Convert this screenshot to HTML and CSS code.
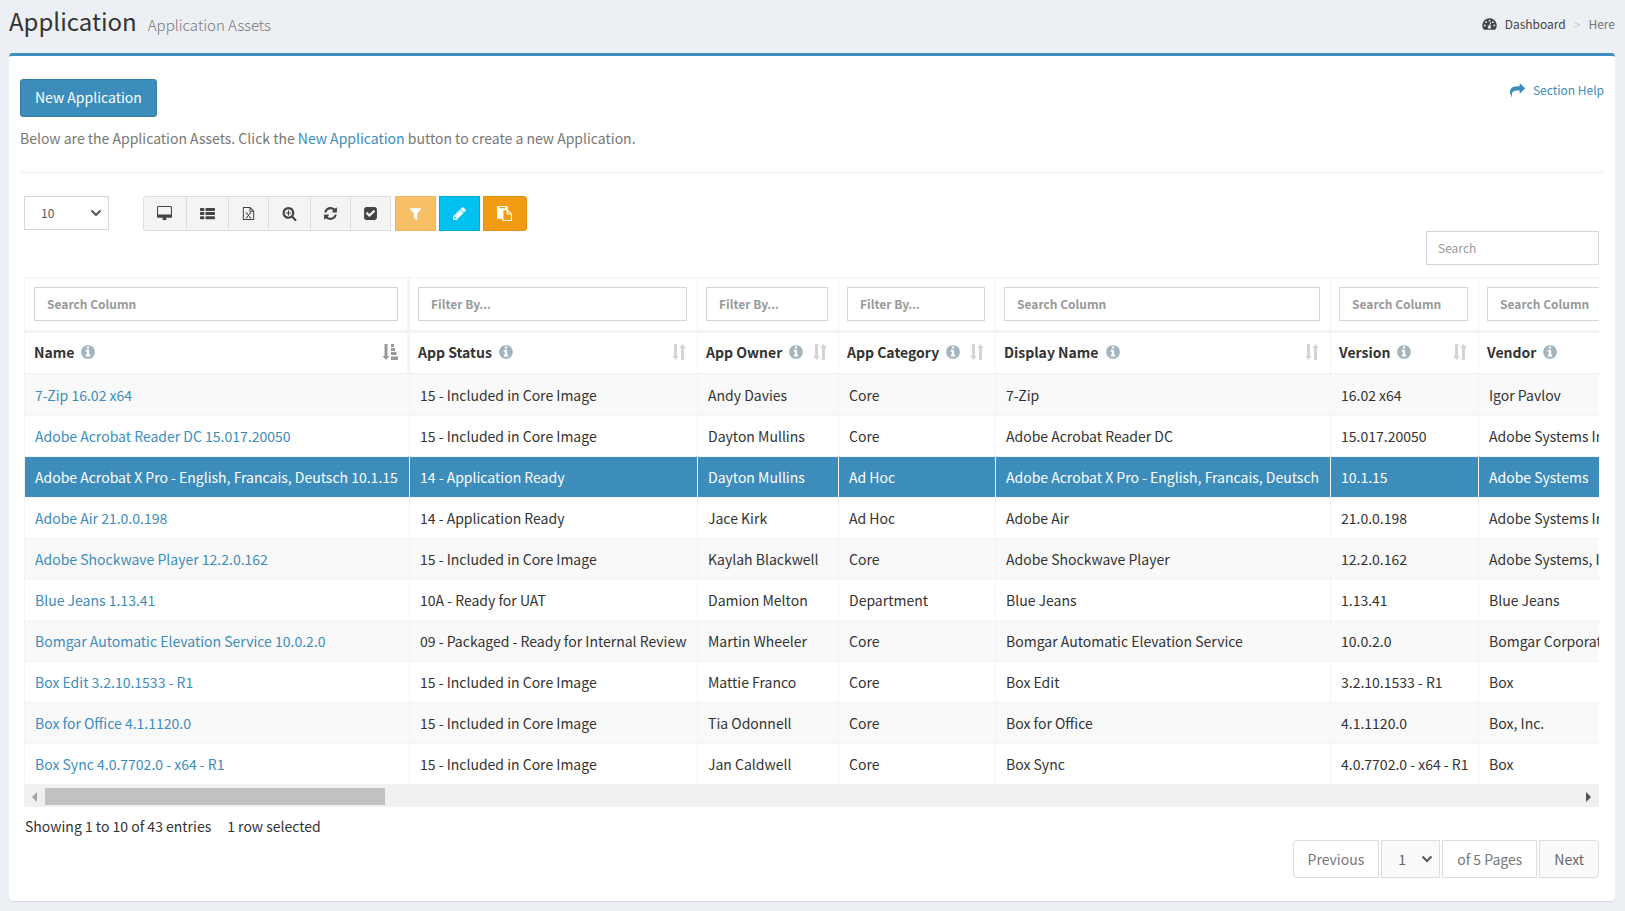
FILE: index.html
```html
<!DOCTYPE html>
<html lang="en">
<head>
<meta charset="utf-8">
<title>Application Assets</title>
<link rel="stylesheet" href="styles.css">
</head>
<body>
<svg class="sprite" aria-hidden="true">
  <symbol id="desktop" viewBox="0 0 1920 1792"><path d="M1728 992v-832q0-13-9.5-22.5t-22.5-9.5h-1472q-13 0-22.5 9.5t-9.5 22.5v832q0 13 9.5 22.5t22.5 9.5h1472q13 0 22.5-9.5t9.5-22.5zm128-832v1088q0 66-47 113t-113 47h-544q0 37 16 77.5t32 71 16 43.5q0 26-19 45t-45 19h-384q-26 0-45-19t-19-45q0-14 16-44t32-70 16-78h-544q-66 0-113-47t-47-113v-1088q0-66 47-113t113-47h1472q66 0 113 47t47 113z"/></symbol>
  <symbol id="list" viewBox="0 0 16 16"><path d="M.8 2h3a.8.8 0 0 1 .8.8v1.6a.8.8 0 0 1-.8.8h-3a.8.8 0 0 1-.8-.8V2.800a.8.8 0 0 1 .8-.8zM.8 6.400h3a.8.8 0 0 1 .8.8v1.600a.8.8 0 0 1-.8.8h-3a.8.8 0 0 1-.8-.8V7.200a.8.8 0 0 1 .8-.8zM.8 10.800h3a.8.8 0 0 1 .8.8v1.600a.8.8 0 0 1-.8.8h-3a.8.8 0 0 1-.8-.8v-1.600a.8.8 0 0 1 .8-.8zM6.600 2h8.600a.8.8 0 0 1 .8.8v1.600a.8.8 0 0 1-.8.8H6.600a.8.8 0 0 1-.8-.8V2.800a.8.8 0 0 1 .8-.8zM6.600 6.400h8.600a.8.8 0 0 1 .8.8v1.600a.8.8 0 0 1-.8.8H6.600a.8.8 0 0 1-.8-.8V7.200a.8.8 0 0 1 .8-.8zM6.600 10.800h8.600a.8.8 0 0 1 .8.8v1.600a.8.8 0 0 1-.8.8H6.600a.8.8 0 0 1-.8-.8v-1.600a.8.8 0 0 1 .8-.8z"/></symbol>
  <symbol id="excel" viewBox="0 0 14 16"><path d="M1.500 1.500h7l4 4v9h-11z M8.500 1.500v4h4" fill="none" stroke="currentColor" stroke-width="1.100" stroke-linejoin="round"/><path d="M4.800 7.500l4.300 5M9.100 7.500l-4.300 5M4 7.500h2M8 7.500h2M4 12.500h2M8 12.500h2" fill="none" stroke="currentColor"/></symbol>
  <symbol id="zoom" viewBox="0 0 1792 1792"><path d="M1088 800v64q0 13-9.500 22.500t-22.500 9.500h-224v224q0 13-9.500 22.500t-22.500 9.500h-64q-13 0-22.500-9.500t-9.500-22.500v-224h-224q-13 0-22.500-9.500t-9.500-22.500v-64q0-13 9.500-22.500t22.500-9.500h224v-224q0-13 9.500-22.500t22.500-9.500h64q13 0 22.500 9.500t9.500 22.500v224h224q13 0 22.500 9.500t9.500 22.500zm128 32q0-185-131.500-316.500t-316.500-131.500-316.500 131.500-131.500 316.500 131.500 316.500 316.500 131.500 316.500-131.500 131.500-316.500zm512 832q0 53-37.500 90.500t-90.500 37.500q-54 0-90-38l-343-342q-179 124-399 124-143 0-273.500-55.500t-225-150-150-225-55.500-273.500 55.500-273.500 150-225 225-150 273.500-55.500 273.500 55.500 225 150 150 225 55.500 273.500q0 220-124 399l343 343q37 37 37 90z"/></symbol>
  <symbol id="refresh" viewBox="0 0 1792 1792"><path d="M1639 1056q0 5-1 7-64 268-268 434.500t-478 166.500q-146 0-282.500-55t-243.500-157l-129 129q-19 19-45 19t-45-19-19-45v-448q0-26 19-45t45-19h448q26 0 45 19t19 45-19 45l-137 137q71 66 161 102t187 36q134 0 250-65t186-179q11-17 53-117 8-23 30-23h192q13 0 22.500 9.500t9.500 22.500zm25-800v448q0 26-19 45t-45 19h-448q-26 0-45-19t-19-45 19-45l138-138q-148-137-349-137-134 0-250 65t-186 179q-11 17-53 117-8 23-30 23h-199q-13 0-22.500-9.500t-9.500-22.500v-7q65-268 270-434.500t480-166.500q146 0 284 55.500t245 156.500l130-129q19-19 45-19t45 19 19 45z"/></symbol>
  <symbol id="check" viewBox="0 0 1792 1792"><path d="M813 1299l614-614q19-19 19-45t-19-45l-102-102q-19-19-45-19t-45 19l-467 467-211-211q-19-19-45-19t-45 19l-102 102q-19 19-19 45t19 45l358 358q19 19 45 19t45-19zm851-883v960q0 119-84.500 203.500t-203.500 84.500h-960q-119 0-203.500-84.500t-84.500-203.500v-960q0-119 84.500-203.500t203.500-84.500h960q119 0 203.500 84.500t84.500 203.500z"/></symbol>
  <symbol id="filter" viewBox="0 0 1792 1792"><path d="M1595 295q17 41-14 70l-493 493v742q0 42-39 59-13 5-25 5-27 0-45-19l-256-256q-19-19-19-45v-486l-493-493q-31-29-14-70 17-39 59-39h1280q42 0 59 39z"/></symbol>
  <symbol id="pencil" viewBox="0 0 1792 1792"><path d="M491 1536l91-91-235-235-91 91v107h128v128h107zm523-928q0-22-22-22-10 0-17 7l-542 542q-7 7-7 17 0 22 22 22 10 0 17-7l542-542q7-7 7-17zm-54-192l416 416-832 832h-416v-416zm683 96q0 53-37 90l-166 166-416-416 166-165q36-38 90-38 53 0 91 38l235 234q37 39 37 91z"/></symbol>
  <symbol id="paste" viewBox="0 0 1792 1792"><path d="M768 1664h896v-640h-416q-40 0-68-28t-28-68v-416h-384v1152zm256-1440v-64q0-13-9.500-22.500t-22.500-9.500h-704q-13 0-22.500 9.500t-9.500 22.500v64q0 13 9.500 22.500t22.500 9.500h704q13 0 22.500-9.500t9.500-22.500zm256 672h299l-299-299v299zm512 128v672q0 40-28 68t-68 28h-960q-40 0-68-28t-28-68v-160h-544q-40 0-68-28t-28-68v-1344q0-40 28-68t68-28h1088q40 0 68 28t28 68v328q21 13 36 28l408 408q28 28 48 76t20 88z"/></symbol>
  <symbol id="info" viewBox="0 0 1792 1792"><path d="M1152 1376v-160q0-14-9-23t-23-9h-96v-512q0-14-9-23t-23-9h-320q-14 0-23 9t-9 23v160q0 14 9 23t23 9h96v320h-96q-14 0-23 9t-9 23v160q0 14 9 23t23 9h448q14 0 23-9t9-23zm-128-896v-160q0-14-9-23t-23-9h-192q-14 0-23 9t-9 23v160q0 14 9 23t23 9h192q14 0 23-9t9-23zm640 416q0 209-103 385.500t-279.500 279.500-385.500 103-385.500-103-279.500-279.500-103-385.500 103-385.500 279.500-279.500 385.500-103 385.500 103 279.500 279.500 103 385.500z"/></symbol>
  <symbol id="share" viewBox="0 0 1792 1792"><path d="M1792 640q0 26-19 45l-512 512q-19 19-45 19t-45-19-19-45v-256h-224q-98 0-175.500 6t-154 21.500-133 42.500-105.500 69.500-80 101-48.500 138.500-17.500 181q0 55 5 123 0 6 2.500 23.500t2.500 26.500q0 15-8.500 25t-23.500 10q-16 0-28-17-7-9-13-22t-13.500-30-10.500-24q-127-285-127-451 0-199 53-333 162-403 875-403h224v-256q0-26 19-45t45-19 45 19l512 512q19 19 19 45z"/></symbol>
  <symbol id="gauge" viewBox="0 0 16 14"><path d="M8 1a7.500 7.500 0 0 0-6.400 11.600q.2.400.7.400h11.400q.5 0 .7-.4A7.500 7.500 0 0 0 8 1z"/><g fill="#ecf0f5"><circle cx="2.900" cy="8.600" r="1"/><circle cx="4.400" cy="5" r="1"/><circle cx="8" cy="3.400" r="1"/><circle cx="11.600" cy="5" r="1"/><circle cx="13.100" cy="8.600" r="1"/><path d="M9.800 5.200l-1.100 3.700a1.700 1.700 0 1 1-1-.2l1.100-3.800z"/></g></symbol>
  <symbol id="sort" viewBox="0 0 16 16"><path d="M3 0h3v12h2l-3.500 4L1 12h2zM10 16V4H8l3.500-4L15 4h-2v12z"/></symbol>
  <symbol id="sorted" viewBox="0 0 16 16"><path d="M2.500 0h3v12h2L4 16 .5 12h2zM9 0h3v3H9zM9 4h4v3H9zM9 8h5.500v3H9zM9 12.500h7V16H9z"/></symbol>
</svg>

<header class="page-head">
  <h1 class="title">Application <small class="subtitle">Application Assets</small></h1>
  <nav class="crumbs" aria-label="Breadcrumb">
    <a class="crumb-link" href="#"><svg class="gauge"><use href="#gauge"/></svg>Dashboard</a>
    <span class="crumb-sep">&gt;</span>
    <span class="crumb-here">Here</span>
  </nav>
</header>

<main class="box">
  <section class="intro">
    <div class="intro-row">
      <button class="btn-primary" type="button">New Application</button>
      <a class="help" href="#"><svg class="icon"><use href="#share"/></svg>Section Help</a>
    </div>
    <p class="lead">Below are the Application Assets. Click the <a href="#">New Application</a> button to create a new Application.</p>
  </section>

  <section class="grid">
    <div class="tools">
      <select class="field length" aria-label="Rows per page"><option>10</option></select>
      <div class="toolbar">
        <button class="tool first" type="button" aria-label="Columns"><svg class="icon wide"><use href="#desktop"/></svg></button>
        <button class="tool mid" type="button" aria-label="List"><svg class="icon"><use href="#list"/></svg></button>
        <button class="tool" type="button" aria-label="Export to Excel"><svg class="icon"><use href="#excel"/></svg></button>
        <button class="tool mid" type="button" aria-label="Zoom"><svg class="icon"><use href="#zoom"/></svg></button>
        <button class="tool" type="button" aria-label="Refresh"><svg class="icon"><use href="#refresh"/></svg></button>
        <button class="tool" type="button" aria-label="Select all"><svg class="icon"><use href="#check"/></svg></button>
        <button class="tool amber" type="button" aria-label="Filter"><svg class="icon"><use href="#filter"/></svg></button>
        <button class="tool cyan" type="button" aria-label="Edit"><svg class="icon"><use href="#pencil"/></svg></button>
        <button class="tool orange" type="button" aria-label="Copy"><svg class="icon"><use href="#paste"/></svg></button>
      </div>
    </div>
    <div class="search-row"><input class="field search" type="text" placeholder="Search" aria-label="Search"></div>

    <div class="scroller">
      <table class="assets">
        <colgroup><col class="c-name"><col class="c-status"><col class="c-owner"><col class="c-cat"><col class="c-display"><col class="c-version"><col class="c-vendor"></colgroup>
        <thead>
          <tr class="filters">
            <th><input class="field" type="text" placeholder="Search Column" aria-label="Search Name"></th>
            <th><input class="field" type="text" placeholder="Filter By..." aria-label="Filter App Status"></th>
            <th><input class="field" type="text" placeholder="Filter By..." aria-label="Filter App Owner"></th>
            <th><input class="field" type="text" placeholder="Filter By..." aria-label="Filter App Category"></th>
            <th><input class="field" type="text" placeholder="Search Column" aria-label="Search Display Name"></th>
            <th><input class="field" type="text" placeholder="Search Column" aria-label="Search Version"></th>
            <th><input class="field" type="text" placeholder="Search Column" aria-label="Search Vendor"></th>
          </tr>
          <tr class="labels">
            <th><div class="label">Name<svg class="info"><use href="#info"/></svg><button class="sort active" type="button" aria-label="Sort by Name"><svg><use href="#sorted"/></svg></button></div></th>
            <th><div class="label">App Status<svg class="info"><use href="#info"/></svg><button class="sort" type="button" aria-label="Sort by App Status"><svg><use href="#sort"/></svg></button></div></th>
            <th><div class="label">App Owner<svg class="info"><use href="#info"/></svg><button class="sort" type="button" aria-label="Sort by App Owner"><svg><use href="#sort"/></svg></button></div></th>
            <th><div class="label">App Category<svg class="info"><use href="#info"/></svg><button class="sort" type="button" aria-label="Sort by App Category"><svg><use href="#sort"/></svg></button></div></th>
            <th><div class="label">Display Name<svg class="info"><use href="#info"/></svg><button class="sort" type="button" aria-label="Sort by Display Name"><svg><use href="#sort"/></svg></button></div></th>
            <th><div class="label">Version<svg class="info"><use href="#info"/></svg><button class="sort" type="button" aria-label="Sort by Version"><svg><use href="#sort"/></svg></button></div></th>
            <th><div class="label">Vendor<svg class="info"><use href="#info"/></svg><button class="sort" type="button" aria-label="Sort by Vendor"><svg><use href="#sort"/></svg></button></div></th>
          </tr>
        </thead>
        <tbody>
          <tr><td><a href="#">7-Zip 16.02 x64</a></td><td>15 - Included in Core Image</td><td>Andy Davies</td><td>Core</td><td>7-Zip</td><td>16.02 x64</td><td>Igor Pavlov</td></tr>
          <tr><td><a href="#">Adobe Acrobat Reader DC 15.017.20050</a></td><td>15 - Included in Core Image</td><td>Dayton Mullins</td><td>Core</td><td>Adobe Acrobat Reader DC</td><td>15.017.20050</td><td>Adobe Systems Incorporated</td></tr>
          <tr class="selected"><td><a href="#">Adobe Acrobat X Pro - English, Francais, Deutsch 10.1.15</a></td><td>14 - Application Ready</td><td>Dayton Mullins</td><td>Ad Hoc</td><td>Adobe Acrobat X Pro - English, Francais, Deutsch</td><td>10.1.15</td><td>Adobe Systems</td></tr>
          <tr><td><a href="#">Adobe Air 21.0.0.198</a></td><td>14 - Application Ready</td><td>Jace Kirk</td><td>Ad Hoc</td><td>Adobe Air</td><td>21.0.0.198</td><td>Adobe Systems Incorporated</td></tr>
          <tr><td><a href="#">Adobe Shockwave Player 12.2.0.162</a></td><td>15 - Included in Core Image</td><td>Kaylah Blackwell</td><td>Core</td><td>Adobe Shockwave Player</td><td>12.2.0.162</td><td>Adobe Systems, Inc.</td></tr>
          <tr><td><a href="#">Blue Jeans 1.13.41</a></td><td>10A - Ready for UAT</td><td>Damion Melton</td><td>Department</td><td>Blue Jeans</td><td>1.13.41</td><td>Blue Jeans</td></tr>
          <tr><td><a href="#">Bomgar Automatic Elevation Service 10.0.2.0</a></td><td>09 - Packaged - Ready for Internal Review</td><td>Martin Wheeler</td><td>Core</td><td>Bomgar Automatic Elevation Service</td><td>10.0.2.0</td><td>Bomgar Corporation</td></tr>
          <tr><td><a href="#">Box Edit 3.2.10.1533 - R1</a></td><td>15 - Included in Core Image</td><td>Mattie Franco</td><td>Core</td><td>Box Edit</td><td>3.2.10.1533 - R1</td><td>Box</td></tr>
          <tr><td><a href="#">Box for Office 4.1.1120.0</a></td><td>15 - Included in Core Image</td><td>Tia Odonnell</td><td>Core</td><td>Box for Office</td><td>4.1.1120.0</td><td>Box, Inc.</td></tr>
          <tr><td><a href="#">Box Sync 4.0.7702.0 - x64 - R1</a></td><td>15 - Included in Core Image</td><td>Jan Caldwell</td><td>Core</td><td>Box Sync</td><td>4.0.7702.0 - x64 - R1</td><td>Box</td></tr>
        </tbody>
      </table>
    </div>
    <div class="scrollbar">
      <button class="arrow left" type="button" aria-label="Scroll left"></button>
      <div class="track"><div class="thumb"></div></div>
      <button class="arrow right" type="button" aria-label="Scroll right"></button>
    </div>

    <div class="status"><span>Showing 1 to 10 of 43 entries</span><span>1 row selected</span></div>
    <div class="pager">
      <button class="page prev" type="button">Previous</button>
      <select class="page page-select" aria-label="Page"><option>1</option></select>
      <span class="page">of 5 Pages</span>
      <button class="page next" type="button">Next</button>
    </div>
  </section>
</main>
</body>
</html>
```
FILE: styles.css
```css
* { box-sizing: border-box; }

body {
  margin: 0;
  padding: 0 10px 10px 9px;
  background: #ecf0f5;
  color: #333;
  font-family: "Noto Sans CJK SC", "Open Sans", sans-serif;
  font-size: 14px;
  line-height: 20px;
}

a { color: #3c8dbc; text-decoration: none; }
button, input, select { font-family: inherit; font-size: inherit; margin: 0; }
button { cursor: pointer; }
svg { display: block; fill: currentColor; }
.sprite { display: none; }
.icon { width: 15px; height: 15px; }
.icon.wide { width: 17px; }

.page-head {
  display: flex;
  justify-content: space-between;
  height: 53px;
}
.title {
  display: flex;
  align-items: baseline;
  gap: 11px;
  margin: 0;
  font-size: 24px;
  font-weight: 400;
  line-height: 42px;
}
.subtitle { font-size: 15px; font-weight: 300; color: #777; }
.crumbs {
  display: flex;
  align-items: center;
  gap: 8px;
  height: 48px;
  font-size: 12px;
  color: #777;
}
.crumb-link { display: flex; align-items: center; gap: 8px; color: #444; }
.gauge { width: 15px; height: 14px; }
.crumb-sep { color: #ccc; }

.box {
  background: #fff;
  border-top: 3px solid #3c8dbc;
  border-radius: 4px;
  box-shadow: 0 1px 1px rgba(0, 0, 0, .1);
  padding: 23px 11px;
}
.intro { border-bottom: 1px solid #eee; padding-bottom: 24px; }
.intro-row { display: flex; justify-content: space-between; align-items: flex-start; }
.btn-primary {
  height: 38px;
  padding: 0 14px 2px;
  border: 1px solid #367fa9;
  border-radius: 3px;
  background: #3c8dbc;
  color: #fff;
}
.help { display: flex; align-items: center; gap: 8px; height: 22px; font-size: 12px; }
.lead { margin: 11px 0 0; color: #777; }

.grid { padding: 23px 5px 0 4px; }
.tools { display: flex; gap: 34px; }
.field {
  display: block;
  width: 100%;
  height: 34px;
  padding: 0 12px 2px;
  border: 1px solid #d2d6de;
  border-radius: 0;
  background-color: #fff;
  color: #555;
  font-size: 12px;
}
.field::placeholder { color: #999; opacity: 1; }
.length, .page-select {
  appearance: none;
  background-image: url("data:image/svg+xml,%3Csvg xmlns='http://www.w3.org/2000/svg' viewBox='0 0 12 8'%3E%3Cpath d='M1.500 1.500L6 6l4.500-4.500' fill='none' stroke='%23555' stroke-width='2'/%3E%3C/svg%3E");
  background-repeat: no-repeat;
  background-position: right 6px center;
  background-size: 12px 8px;
}
.length { width: 85px; padding: 0 16px 2px; }
.toolbar { display: flex; }
.tool {
  display: flex;
  align-items: center;
  justify-content: center;
  width: 41px;
  height: 35px;
  margin-right: -1px;
  padding: 0 1px 0 0;
  border: 1px solid #ddd;
  background: #f4f4f4;
  color: #444;
}
.tool.mid { width: 43px; }
.tool.first { width: 44px; border-radius: 3px 0 0 3px; }
.tool.amber, .tool.cyan, .tool.orange { color: #fff; margin: 0 0 0 3px; }
.tool.amber { background: #f7c067; border-color: #edb45a; margin-left: 5px; }
.tool.cyan { background: #00c0ef; border-color: #00acd6; }
.tool.orange { width: 44px; background: #f39c12; border-color: #e08e0b; border-radius: 0 3px 3px 0; }

.search-row { display: flex; justify-content: flex-end; margin-bottom: 12px; }
.search { width: 173px; padding: 0 11px 2px; }

.scroller { overflow: hidden; }
.assets {
  table-layout: fixed;
  width: 1816px;
  border-collapse: separate;
  border-spacing: 0;
}
.c-name { width: 385px; }
.c-status { width: 288px; }
.c-owner { width: 141px; }
.c-cat { width: 157px; }
.c-display { width: 335px; }
.c-version { width: 148px; }
.c-vendor { width: 362px; }
.assets th, .assets td {
  padding: 0 9px;
  border-left: 1px solid #f4f4f4;
  text-align: left;
  white-space: nowrap;
}
.assets td { padding: 0 8px 0 10px; }
.assets th + th { padding: 0 10px 0 8px; }
.assets th:first-child { border-right: 2px solid #f4f4f4; }
.filters th { height: 56px; border-top: 1px solid #f4f4f4; border-bottom: 3px solid #f4f4f4; }
.filters .field { font-weight: 700; }
.filters th:last-child .field { width: 134px; }
.labels th { height: 42px; border-bottom: 2px solid #f4f4f4; }
.label { display: flex; align-items: center; line-height: 20px; padding-bottom: 2px; }
.info { width: 16px; height: 16px; margin-left: 6px; color: #a2b4be; }
.sort { margin-left: auto; padding: 0; border: 0; background: none; color: #d4d4d4; }
.sort svg { width: 16px; height: 16px; }
.sort.active { color: #999; }
.assets td { height: 41px; border-bottom: 1px solid #f4f4f4; }
.assets tbody tr:nth-child(odd) { background: #f9f9f9; }
.assets tbody tr.selected { background: #3c8dbc; color: #fff; }
.selected a { color: #fff; }

.scrollbar { display: flex; height: 22px; padding: 3px 0 2px; background: #f0f0f0; }
.arrow { width: 21px; padding: 0; border: 0; background: none; display: flex; align-items: center; justify-content: center; }
.arrow::before { content: ""; border: 5px solid transparent; }
.arrow.left::before { border-left: 0; border-right-color: #a3a3a3; }
.arrow.right::before { border-right: 0; border-left-color: #505050; }
.track { flex: 1; }
.thumb { width: 22.2%; height: 100%; background: #c1c1c1; }

.status { display: flex; gap: 16px; margin-top: 9px; padding-left: 1px; }
.pager { display: flex; justify-content: flex-end; gap: 2px; margin: 4px 0 0; }
.page {
  height: 38px;
  padding: 0 14px;
  border: 1px solid #ddd;
  border-radius: 0;
  background-color: #fff;
  color: #777;
  line-height: 36px;
}
.page-select { width: 59px; padding: 0 16px; background-color: #fafafa; color: #666; }
.prev { border-radius: 4px 0 0 4px; }
.next { border-radius: 0 4px 4px 0; background-color: #fafafa; color: #666; }
```
